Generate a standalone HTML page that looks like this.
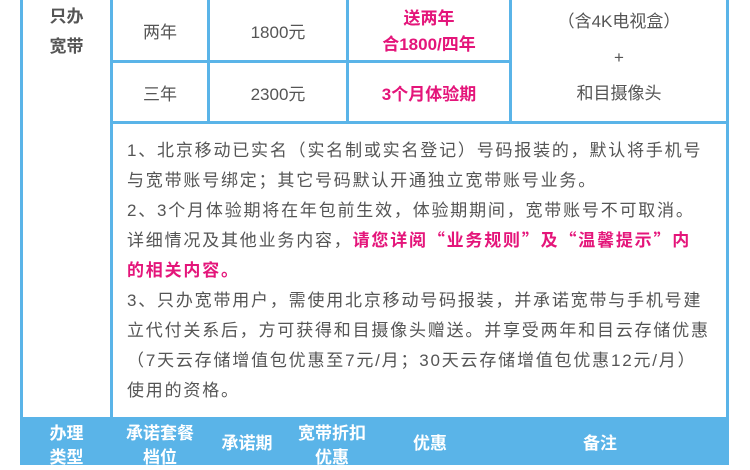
<!DOCTYPE html>
<html><head><meta charset="utf-8"><style>
body{margin:0;width:750px;height:465px;background:#fff;position:relative;overflow:hidden;font-family:"Liberation Sans","Noto Sans CJK SC",sans-serif;color:#555;}
.v{position:absolute;background:#5ab4e8;width:3px;}
.h{position:absolute;background:#5ab4e8;height:3px;}
.t{position:absolute;font-size:17px;white-space:nowrap;text-align:center;}
.p{color:#e4157a;font-weight:bold;}
.q{font-family:"Noto Sans CJK SC",sans-serif;line-height:0;vertical-align:baseline;}
.notes{position:absolute;left:127px;top:136px;font-size:17px;line-height:30px;letter-spacing:1.8px;white-space:nowrap;}
.notes div{height:30px;overflow:visible;}
.hd{position:absolute;left:20px;top:417px;width:709px;height:48px;background:#5ab4e8;}
.w{position:absolute;color:#fff;font-weight:bold;font-size:17px;line-height:24px;text-align:center;white-space:nowrap;}
</style></head><body>
<div class="v" style="left:20px;top:0;height:417px"></div>
<div class="v" style="left:110px;top:0;height:417px"></div>
<div class="v" style="left:207px;top:0;height:123px"></div>
<div class="v" style="left:346px;top:0;height:123px"></div>
<div class="v" style="left:509px;top:0;height:123px"></div>
<div class="v" style="left:726px;top:0;height:417px"></div>
<div class="h" style="left:110px;top:60px;width:400px"></div>
<div class="h" style="left:110px;top:121px;width:619px"></div>

<div class="t" style="left:23px;width:87px;top:2px;line-height:30px;font-weight:bold">只办<br>宽带</div>
<div class="t" style="left:113px;width:94px;top:18px">两年</div>
<div class="t" style="left:210px;width:136px;top:18px">1800元</div>
<div class="t p" style="left:349px;width:160px;top:6px;line-height:26px">送两年<br>合1800/四年</div>
<div class="t" style="left:113px;width:94px;top:80px">三年</div>
<div class="t" style="left:210px;width:136px;top:80px">2300元</div>
<div class="t p" style="left:349px;width:160px;top:80px">3个月体验期</div>
<div class="t" style="left:512px;width:214px;top:4px;line-height:36px">（含4K电视盒）<br>+<br>和目摄像头</div>

<div class="notes">
<div>1、北京移动已实名<span class="q">（</span>实名制或实名登记<span class="q">）</span>号码报装的，默认将手机号</div>
<div>与宽带账号绑定；其它号码默认开通独立宽带账号业务。</div>
<div>2、3个月体验期将在年包前生效，体验期期间，宽带账号不可取消。</div>
<div>详细情况及其他业务内容，<span class="p">请您详阅<span class="q">“</span>业务规则<span class="q">”</span>及<span class="q">“</span>温馨提示<span class="q">”</span>内</span></div>
<div><span class="p">的相关内容。</span></div>
<div>3、只办宽带用户，需使用北京移动号码报装，并承诺宽带与手机号建</div>
<div>立代付关系后，方可获得和目摄像头赠送。并享受两年和目云存储优惠</div>
<div><span class="q">（</span>7天云存储增值包优惠至7元/月；30天云存储增值包优惠12元/月<span class="q">）</span></div>
<div>使用的资格。</div>
</div>

<div class="hd"></div>
<div class="w" style="left:23px;width:87px;top:422px">办理<br>类型</div>
<div class="w" style="left:113px;width:94px;top:422px">承诺套餐<br>档位</div>
<div class="w" style="left:207px;width:80px;top:432px">承诺期</div>
<div class="w" style="left:287px;width:90px;top:422px">宽带折扣<br>优惠</div>
<div class="w" style="left:390px;width:80px;top:432px">优惠</div>
<div class="w" style="left:550px;width:100px;top:432px">备注</div>
</body></html>
